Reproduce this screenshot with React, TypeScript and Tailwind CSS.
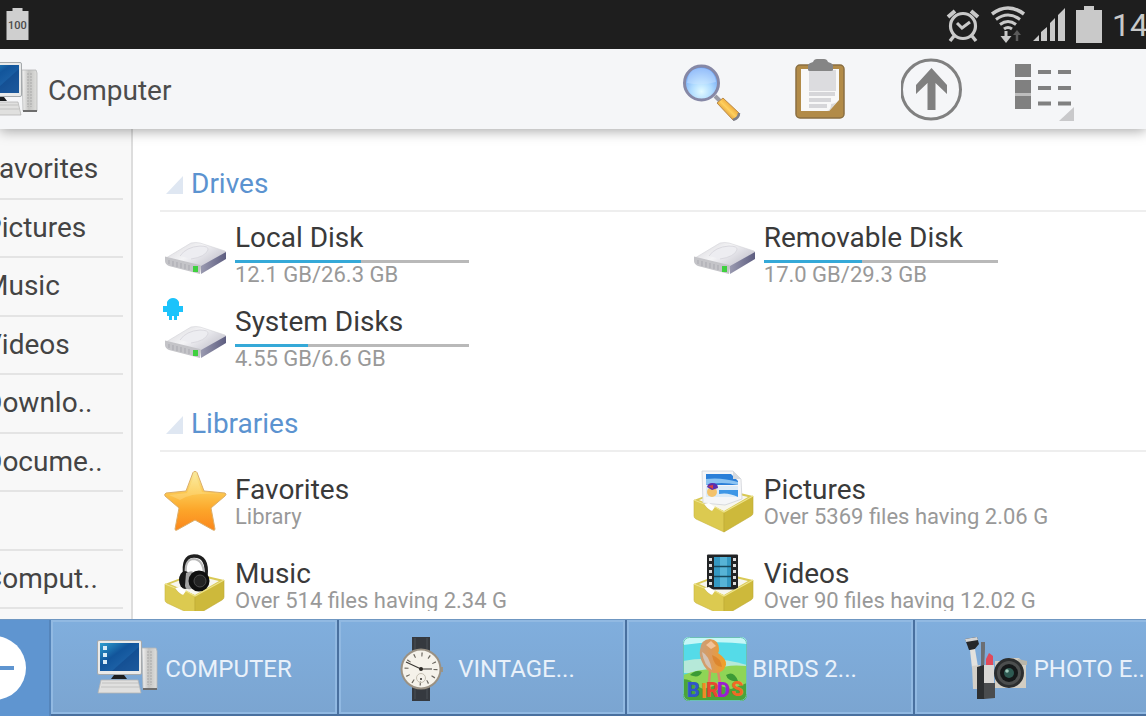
import { ReactNode } from "react";

const SIDEBAR = ["Favorites", "Pictures", "Music", "Videos", "Downlo..", "Docume..", "", "Comput.."];

const ComputerIcon = ({ id }: { id: string }) => (
    <svg viewBox="0 0 64 64" className="size-16 shrink-0" aria-hidden="true">
        <defs>
            <linearGradient id={id + "-screen"} x1="0" y1="0" x2="1" y2="1">
                <stop offset="0" stopColor="#2f9fd0" />
                <stop offset="0.4" stopColor="#12559b" />
                <stop offset="1" stopColor="#2a70b4" />
            </linearGradient>
            <linearGradient id={id + "-tower"} x1="0" x2="1">
                <stop offset="0" stopColor="#f4f4f4" />
                <stop offset="0.45" stopColor="#c3c3c1" />
                <stop offset="1" stopColor="#dededc" />
            </linearGradient>
        </defs>
        <path d="M46 11h14l1 3v38H47z" fill={`url(#${id}-tower)`} stroke="#b5b6b6" strokeWidth="0.8" />
        <path d="M52 14v34M55 14v34" stroke="#a9a9a9" strokeWidth="1" strokeDasharray="2 1" />
        <path d="M47 52h14" stroke="#6d6d6d" strokeWidth="2" />
        <rect x="1.5" y="3.5" width="44" height="34" rx="1.5" fill="#e9eaea" stroke="#a5a9ac" strokeWidth="1" />
        <rect x="4" y="6" width="39" height="28" fill={`url(#${id}-screen)`} />
        <path d="M16 34L43 10v24z" fill="#0d3f80" opacity="0.45" />
        <path d="M7 9h4v4H7zM7 16h4v4H7zM7 23h4v4H7z" fill="#d9ecf7" />
        <path d="M18 38h10l3 4H15z" fill="#1c1e20" />
        <path d="M5 43h37l3 13H2z" fill="#e0e0df" stroke="#b5b5b4" strokeWidth="0.8" />
        <path d="M6 46h36M5 50h38" stroke="#cbcbcb" strokeWidth="1.5" />
    </svg>
);

const DriveIcon = ({ id, android }: { id: string; android?: boolean }) => (
    <svg viewBox="0 0 64 64" className="size-16 shrink-0 overflow-visible" aria-hidden="true">
        <defs>
            <linearGradient id={id + "-top"} x1="0" y1="0" x2="1" y2="0.6">
                <stop offset="0" stopColor="#d5d4d8" />
                <stop offset="0.5" stopColor="#f4f4f6" />
                <stop offset="1" stopColor="#c6c5cf" />
            </linearGradient>
            <linearGradient id={id + "-side"} x1="0" x2="1">
                <stop offset="0" stopColor="#9a9ab0" />
                <stop offset="1" stopColor="#5d5d80" />
            </linearGradient>
        </defs>
        <path d="M2 36L27 21q5-1 9 0l25 8q2 1 0 2L37 45z" fill={`url(#${id}-top)`} stroke="#d3d3d8" strokeWidth="0.6" />
        <path d="M16 34q6-9 20-10 9 0 8 4-3 7-17 9" fill="#ededf1" stroke="#dad9df" strokeWidth="1" />
        <path d="M1 35q0-1 2 0l33 8q2 1 1 3l-1 6L5 44q-4-2-4-5z" fill="#c4c4c8" />
        <path d="M5 38v4M9 39v5M13 40v5M17 41v5M21 42v5M25 43v5" stroke="#a9a9b0" strokeWidth="1" />
        <path d="M37 44l25-14v7L37 52z" fill={`url(#${id}-side)`} />
        <rect x="29" y="44" width="5" height="6" fill="#3fd03f" />
        {android && (
            <path d="M3-4q2-4 6-4t6 4v14H3zM-1 0h4v6h-4zM15 0h4v6h-4zM5 9h3v5H5zM10 9h3v5h-3z" fill="#1cc3fb" />
        )}
    </svg>
);

const StarIcon = () => (
    <svg viewBox="0 0 64 64" className="size-16 shrink-0" aria-hidden="true">
        <defs>
            <linearGradient id="star" x1="0" y1="0" x2="0" y2="1">
                <stop offset="0" stopColor="#f9eb9e" />
                <stop offset="0.35" stopColor="#fcc851" />
                <stop offset="0.65" stopColor="#fca62a" />
                <stop offset="1" stopColor="#fb861c" />
            </linearGradient>
        </defs>
        <path d="M31 1.5q1.5 0 2 1L40 21l21 2q2 1 0 3L47 38l4 21q0 2-2 1L31 50 13 60q-2 1-2-1l4-21L1 26q-1-2 1-3l20-2 7-18.5q.5-1 2-1z" fill="url(#star)" stroke="#dbae6a" strokeWidth="1" />
        <path d="M31 4l7 18 20 2q-30-2-42 6L5 25l18-2z" fill="#fff3b8" opacity="0.25" />
    </svg>
);

const BoxIcon = ({ children }: { children: ReactNode }) => (
    <svg viewBox="0 0 64 64" className="size-16 shrink-0" aria-hidden="true">
        <path d="M1 30L30 19l30 7-29 17z" fill="#d9c955" />
        <path d="M6 30L30 21l25 6-24 14z" fill="#f7f6ee" />
        {children}
        <path d="M1 30l10 4 3 4 4 3 4-4 9 5v20L3 49q-2-1-2-3z" fill="#dcca50" stroke="#c9b53f" strokeWidth="0.6" />
        <path d="M31 42l29-16v17q0 2-2 3L31 62z" fill="#cdb93b" stroke="#bda932" strokeWidth="0.6" />
        <path d="M11 34l4 4 4 3 3-4-6-4z" fill="#ffffff" />
        <path d="M1 30l10 4M22 37l9 5 29-16" fill="none" stroke="#eee48a" strokeWidth="1.2" />
    </svg>
);

const PicturesIcon = () => (
    <BoxIcon>
        <path d="M9 1h31l8 8 1 20-17 6-22-2z" fill="#f5f6f8" stroke="#d0d3d8" strokeWidth="0.8" />
        <path d="M13 4h25l7 7v4H13z" fill="#2b7fd8" />
        <path d="M13 9q15-2 32 3v3q-17-4-32 0z" fill="#8cc4f2" />
        <path d="M13 16h32v11H13z" fill="#dcebf7" />
        <path d="M26 20h19v7q-10-5-19-3z" fill="#3f97e6" />
        <circle cx="19" cy="22" r="5" fill="#f3c26b" />
        <path d="M14 17q1-4 5-4 6 0 6 5l-6 2z" fill="#5a2fae" />
        <path d="M15 16l5-1v4z" fill="#d8433c" />
        <path d="M40 1v8h8z" fill="#d5d9de" />
    </BoxIcon>
);

const MusicIcon = () => (
    <BoxIcon>
        <path d="M21 22Q18 2 30 2q14 0 12 20" fill="none" stroke="#1f1f1f" strokeWidth="3.5" />
        <path d="M22 22Q20 6 29 5q10 0 11 15" fill="none" stroke="#b9b9b9" strokeWidth="2" />
        <ellipse cx="21" cy="26" rx="6" ry="9" fill="#171717" />
        <path d="M22 19q7-4 9 1l-4 15q-5 1-6-3z" fill="#a3a3a3" />
        <circle cx="35" cy="27" r="10.500" fill="#101010" />
        <circle cx="36" cy="27" r="6" fill="#232323" stroke="#4c4c4c" strokeWidth="1" />
    </BoxIcon>
);

const VideosIcon = () => (
    <BoxIcon>
        <rect x="14" y="0.500" width="31" height="35" rx="1" fill="#222426" />
        <rect x="21" y="3" width="17" height="30" fill="#3498c2" />
        <path d="M27 3h7v30h-7z" fill="#6fc4e2" opacity="0.6" />
        <path d="M21 12.500h17M21 22.500h17" stroke="#17475c" strokeWidth="1.500" />
        <path d="M17.500 4v29M41.500 4v29" stroke="#dcdcdc" strokeWidth="3" strokeDasharray="3 3" />
    </BoxIcon>
);

const WatchIcon = () => (
    <svg viewBox="0 0 64 64" className="size-16 shrink-0" aria-hidden="true">
        <path d="M23 0h18v15H23zM23 50h18v14H23z" fill="#35393f" />
        <path d="M26 1v12M38 1v12M26 52v10M38 52v10" stroke="#4b5057" strokeWidth="1" />
        <path d="M52 30h2v5h-2z" fill="#9c9486" />
        <circle cx="32" cy="32" r="20.5" fill="#9a9183" />
        <circle cx="32" cy="32" r="18.5" fill="#f5f2ea" />
        <circle cx="32" cy="32" r="14.5" fill="none" stroke="#6b675f" strokeWidth="4" strokeDasharray="1.2 6.39" />
        <circle cx="32" cy="41" r="4.5" fill="none" stroke="#c5bfb2" strokeWidth="1" />
        <path d="M32 32L17 25M32 32h11" stroke="#3a3733" strokeWidth="1.2" />
        <circle cx="32" cy="32" r="2" fill="#2a2723" />
        <circle cx="32" cy="42" r="1" fill="#2a2723" />
    </svg>
);

const BirdsIcon = () => (
    <svg viewBox="0 0 64 64" className="size-16 shrink-0" aria-hidden="true">
        <defs>
            <clipPath id="birds-clip"><rect width="64" height="64" rx="6" /></clipPath>
            <linearGradient id="birds-body" x1="0" x2="1">
                <stop offset="0" stopColor="#c9a07a" />
                <stop offset="0.45" stopColor="#dd9a58" />
                <stop offset="1" stopColor="#f2a022" />
            </linearGradient>
        </defs>
        <g clipPath="url(#birds-clip)">
            <rect width="64" height="64" fill="#55dbe8" />
            <path d="M0 0h64v7Q30 3 0 8z" fill="#c5f7f7" />
            <path d="M0 24q30-6 64 4v8H0z" fill="#b6e9d9" />
            <path d="M0 38q18-7 34-6 10-5 30-3v35H0z" fill="#8ed556" />
            <path d="M0 42q8 0 12 6l8 4 14-4 14 4 16-6v18H0z" fill="#4ba438" />
            <path d="M7 38q6-6 12-3-3 7-12 3zM43 38q8-5 12 6-10 1-12-6z" fill="#3b9a36" />
            <path d="M27 34l-1 12M35 34l2 12" stroke="#d98b68" strokeWidth="2.5" />
            <path d="M17 13q1-11 10-11 9 1 9 10 0 3-1 4 9 6 8 12-3 9-12 8-8-1-12-11-3-6-2-12z" fill="url(#birds-body)" />
            <path d="M19 15q7 3 10 18-8-4-10-18z" fill="#d5c3b4" />
            <path d="M29 18q9 3 10 12-8 0-10-12z" fill="#d97d27" opacity="0.7" />
            <path d="M23 8l5-4 5 5-5 3z" fill="#f2c49a" />
            <g fontFamily="Roboto, sans-serif" fontWeight="900" fontSize="20">
                <text x="4" y="60" fill="#3155c9">B</text>
                <text x="18" y="61" fill="#f08a24">I</text>
                <text x="23" y="60" fill="#e8492f">R</text>
                <text x="34" y="60" fill="#9b1fd0">D</text>
                <text x="48" y="59" fill="#f06a25">S</text>
            </g>
        </g>
        <rect x="0.5" y="0.5" width="63" height="63" rx="6" fill="none" stroke="#6bc0b5" strokeWidth="1" />
    </svg>
);

const PhotoIcon = () => (
    <svg viewBox="0 0 64 64" className="size-16 shrink-0" aria-hidden="true">
        <path d="M0 2l12-2 2 7-5 6H4z" fill="#25272a" />
        <path d="M0 2l12-2 1 3L1 5z" fill="#d5d5d5" />
        <path d="M5 13l5-1 3 18-6 1z" fill="#e3e1dd" />
        <path d="M16 5h4v7l-1 20h-3z" fill="#6c6f73" />
        <path d="M7 29l8-1 1 24H8z" fill="#d3cfc8" />
        <path d="M12 30l7-2 1 34h-8z" fill="#2d2f31" />
        <path d="M21 22l3-6 4 3v11h-7z" fill="#e04a5b" />
        <path d="M19 28h10v20H19z" fill="#d9d7d4" />
        <path d="M19 46h11v15l-11 1z" fill="#4a4c4e" />
        <path d="M30 24h10l4-3h10l3 3h4v27H30z" fill="#d3cec3" />
        <path d="M53 22l9 2v4h-9z" fill="#b9b5a9" />
        <circle cx="44" cy="36" r="15" fill="#2c2e2f" />
        <circle cx="44" cy="36" r="12" fill="#4c4e4e" />
        <circle cx="44" cy="36" r="9" fill="#151819" />
        <circle cx="44" cy="36" r="5" fill="#2e5a52" />
        <circle cx="42" cy="34" r="1.8" fill="#9fc9bb" />
    </svg>
);

const StatusBar = () => (
    <div className="relative z-20 flex h-[49px] shrink-0 items-center justify-between overflow-hidden bg-[#1e1e1e] text-[#c9c9c9]">
        <svg viewBox="0 0 36 36" className="size-9" aria-label="Battery 100">
            <path d="M6.500 4h6V1h10v3h6v29h-22z" fill="#cfcfcf" />
            <text x="17.500" y="22" textAnchor="middle" fontSize="11" fontWeight="500" fontFamily="Roboto, sans-serif" fill="#4a4a4a">100</text>
        </svg>
        <div className="-mr-0.5 flex items-center gap-2">
            <svg viewBox="0 0 36 36" className="size-9" fill="none" stroke="#c9c9c9" aria-label="Alarm">
                <circle cx="19" cy="19" r="12.5" strokeWidth="3.2" />
                <path d="M13 16l5 5 8-6" strokeWidth="3" />
                <path d="M4 10l7-6M27 4l7 6" strokeWidth="4" />
                <path d="M10 29l-4 5M28 29l4 5" strokeWidth="3.5" />
            </svg>
            <svg viewBox="0 0 36 36" className="size-9 overflow-visible" fill="none" stroke="#c9c9c9" aria-label="Wi-Fi">
                <path d="M4 7q16-12 32 0" strokeWidth="3.5" />
                <path d="M8 12.500q12-9 24 0" strokeWidth="3" />
                <path d="M12 17.500q8-6 16 0" strokeWidth="3" />
                <path d="M16 22q4-3 8 0" strokeWidth="3" />
                <path d="M18 24v6" strokeWidth="3" />
                <path d="M12.500 29h11L18 36z" fill="#c9c9c9" stroke="none" />
                <path d="M29 34v-7" stroke="#5b5b5b" strokeWidth="2.500" />
                <path d="M25 28l4-5 4 5z" fill="#5b5b5b" stroke="none" />
            </svg>
            <svg viewBox="0 0 36 36" className="size-9" fill="#c9c9c9" aria-label="Signal">
                <path d="M1 34l6-6v6zM9 25l6-5v14H9zM18 16l5-5v23h-5zM26 8l7-7v33h-7z" />
            </svg>
            <svg viewBox="0 0 28 40" className="h-10 w-7" fill="#c9c9c9" aria-label="Battery">
                <path d="M0 5h8V1h10v4h8v33H0z" />
            </svg>
            <span className="text-[32px] leading-8">14</span>
        </div>
    </div>
);

const ToolButton = ({ label, children }: { label: string; children: ReactNode }) => (
    <button type="button" aria-label={label} className="flex h-full w-[110px] items-center justify-center">
        <svg viewBox="0 0 64 64" className="size-16">{children}</svg>
    </button>
);

const Header = () => (
    <header className="relative z-10 flex h-20 shrink-0 items-center justify-between bg-[#f5f6f8] pr-12 shadow-[0_2px_12px_rgba(0,0,0,0.35)]">
        <div className="-ml-6 flex items-center gap-2 pt-1">
            <ComputerIcon id="head" />
            <h1 className="text-[28px] leading-8 text-[#4c4c4c]">Computer</h1>
        </div>
        <div className="flex h-full">
            <ToolButton label="Search">
                <defs>
                    <radialGradient id="lens" cx="0.5" cy="0.75" r="0.75">
                        <stop offset="0" stopColor="#e3fbff" />
                        <stop offset="0.4" stopColor="#b0dcff" />
                        <stop offset="1" stopColor="#5b94f3" />
                    </radialGradient>
                    <linearGradient id="handle" x1="0" y1="1" x2="1" y2="0">
                        <stop offset="0.2" stopColor="#c9781a" />
                        <stop offset="0.5" stopColor="#ffd05e" />
                        <stop offset="0.8" stopColor="#e08a1e" />
                    </linearGradient>
                </defs>
                <path d="M34 39l5 5" stroke="#9a9ba5" strokeWidth="4" />
                <path d="M36 46l6-5 16 15q1 5-6 7z" fill="url(#handle)" stroke="#b98a4a" strokeWidth="1" />
                <path d="M52 63q6-2 6-7" fill="none" stroke="#7f7f88" strokeWidth="2.5" />
                <circle cx="20.5" cy="26" r="17" fill="url(#lens)" stroke="#8688a6" strokeWidth="3" />
                <path d="M6 26Q7 11 20 11t15 14q-14 4-29 1z" fill="#cfe4ff" opacity="0.45" />
            </ToolButton>
            <ToolButton label="Paste">
                <rect x="5" y="8" width="48" height="53" rx="4" fill="#b28b48" stroke="#8a6f41" strokeWidth="1.5" />
                <path d="M10 12h38v31L38 54H10z" fill="#f8f8f8" />
                <path d="M36 54q4-1 4-7 6-1 8-4L38 54z" fill="#d9d9d9" />
                <path d="M18 13h27v21H18z" fill="#dcdcdf" />
                <path d="M18 37h26M18 43h22M18 49h18" stroke="#d6d6d9" strokeWidth="4" />
                <path d="M17 8q1-2 5-3 1-3 4-3h7q3 0 4 3 4 1 5 3v5q0 1-2 1H19q-2 0-2-1z" fill="#858585" />
            </ToolButton>
            <ToolButton label="Up">
                <circle cx="30" cy="32.500" r="29.500" fill="none" stroke="#808080" strokeWidth="3" />
                <path d="M30.500 11L46 28v9L34.500 26v27h-8V26L15 37v-9z" fill="#808080" />
            </ToolButton>
            <ToolButton label="View">
                <path d="M4 7h16v13H4zM4 23h16v13H4zM4 39h16v13H4z" fill="#808080" />
                <path d="M4 36h16v3H4z" fill="#bdbdbd" />
                <path d="M27 15h13M47 15h13M27 31h13M47 31h13M27 46.5h13M47 46.5h13" stroke="#808080" strokeWidth="4" />
                <path d="M63 50v14H48z" fill="#c9c9cb" />
            </ToolButton>
        </div>
    </header>
);

const Section = ({ title, children }: { title: string; children: ReactNode }) => (
    <section className="mb-2">
        <h2 className="flex h-16 items-end gap-2 border-b-2 border-[#eeeeee] pb-2.5 pl-1.5 text-[28px] leading-8 text-[#5b93d0]">
            <svg viewBox="0 0 17 32" className="h-8 w-[17px]" aria-hidden="true">
                <path d="M17 8v18H0z" fill="#dfe7f2" />
            </svg>
            {title}
        </h2>
        <ul className="grid grid-cols-[7fr_6fr] pl-1">{children}</ul>
    </section>
);

const Drive = ({ id, name, usage, percent, android }: { id: string; name: string; usage: string; percent: number; android?: boolean }) => (
    <li className="flex h-[84px] items-center gap-[7px]">
        <DriveIcon id={id} android={android} />
        <div>
            <p className="text-[28px] leading-8 text-[#3a3a3a]">{name}</p>
            <div role="progressbar" aria-label={name} aria-valuenow={percent} className="mt-1.5 h-[3px] w-[234px] bg-[#b9b9b9]">
                <div className="h-full bg-[#35a9d8]" style={{ width: percent + "%" }} />
            </div>
            <p className="text-[22px] leading-6 text-[#999999]">{usage}</p>
        </div>
    </li>
);

const Library = ({ icon, name, info }: { icon: ReactNode; name: string; info: string }) => (
    <li className="flex h-[84px] items-center gap-[7px] whitespace-nowrap">
        {icon}
        <div>
            <p className="text-[28px] leading-[30px] text-[#3a3a3a]">{name}</p>
            <p className="text-[22px] leading-6 text-[#999999]">{info}</p>
        </div>
    </li>
);

const Tab = ({ icon, label }: { icon: ReactNode; label: string }) => (
    <button type="button" className="w-72 shrink-0 border-r-2 border-b-2 border-[#49709f]">
        <span className="flex h-full items-center justify-center gap-[5px] border-2 border-[#91b9e2] bg-linear-to-b from-[#80aedd] to-[#7ba5d1] pt-1 text-2xl leading-8 whitespace-nowrap text-[#e9f1fa]">
            {icon}
            {label}
        </span>
    </button>
);

const App = () => {
    return (
        <div className="flex h-screen flex-col overflow-hidden bg-white font-[Roboto,sans-serif]">
            <StatusBar />
            <Header />
            <div className="flex min-h-0 flex-1">
                <nav className="flex w-[133px] shrink-0 overflow-hidden border-r-2 border-[#dddddd] bg-[#f8f8f8] pt-3 pr-2 pb-2.5">
                    <ul className="-ml-4 flex flex-1 flex-col">
                        {SIDEBAR.map((item, i) => (
                            <li key={i} className="flex flex-1 items-center border-b-2 border-[#e4e4e4]">
                                {item && <a href="#" className="text-[28px] leading-8 whitespace-nowrap text-[#444444]">{item}</a>}
                            </li>
                        ))}
                    </ul>
                </nav>
                <main className="mb-2 min-w-0 flex-1 overflow-hidden pt-[19px] pl-[27px]">
                    <Section title="Drives">
                        <Drive id="local" name="Local Disk" usage="12.1 GB/26.3 GB" percent={54} />
                        <Drive id="removable" name="Removable Disk" usage="17.0 GB/29.3 GB" percent={42} />
                        <Drive id="system" name="System Disks" usage="4.55 GB/6.6 GB" percent={31} android />
                    </Section>
                    <Section title="Libraries">
                        <li className="col-span-2 h-2" aria-hidden="true" />
                        <Library icon={<StarIcon />} name="Favorites" info="Library" />
                        <Library icon={<PicturesIcon />} name="Pictures" info="Over 5369 files having 2.06 G" />
                        <Library icon={<MusicIcon />} name="Music" info="Over 514 files having 2.34 G" />
                        <Library icon={<VideosIcon />} name="Videos" info="Over 90 files having 12.02 G" />
                    </Section>
                </main>
            </div>
            <footer className="flex h-[97px] shrink-0 overflow-hidden border-t border-[#6f97c2] bg-[#5f95d0]">
                <button type="button" aria-label="Close" className="flex w-[51px] shrink-0 items-center overflow-hidden border-r-2 border-[#5585bb]">
                    <svg viewBox="0 0 64 64" className="-ml-[38px] size-16 shrink-0">
                        <circle cx="32" cy="32" r="32" fill="#ffffff" />
                        <path d="M12 32h40" stroke="#5f95d0" strokeWidth="4" />
                    </svg>
                </button>
                <Tab icon={<ComputerIcon id="tab" />} label="COMPUTER" />
                <Tab icon={<WatchIcon />} label="VINTAGE..." />
                <Tab icon={<BirdsIcon />} label="BIRDS 2..." />
                <Tab icon={<PhotoIcon />} label="PHOTO E..." />
            </footer>
        </div>
    );
};

export default App;
